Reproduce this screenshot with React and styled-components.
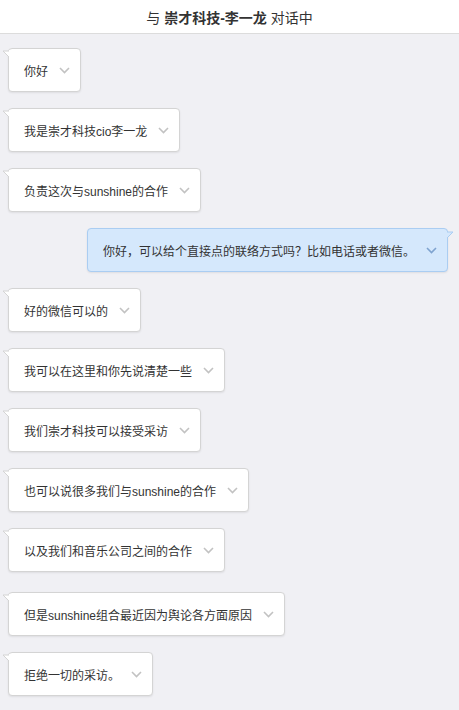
import React from 'react'
import styled, { createGlobalStyle } from 'styled-components'

const GlobalStyle = createGlobalStyle`
    html, body {
        margin: 0;
        padding: 0;
        background: #f0f0f4;
    }
    body {
        font-family: "Liberation Sans", "Noto Sans CJK SC", sans-serif;
        color: #333;
    }
`

const Page = styled.div`
    width: 459px;
    min-height: 710px;
    background: #f0f0f4;
`

const Header = styled.div`
    height: 33px;
    background: #fff;
    border-bottom: 1px solid #dcdcdc;
    display: flex;
    align-items: center;
    justify-content: center;
    font-size: 14px;
    color: #333;
    white-space: pre;
`

const Name = styled.b`
    font-weight: bold;
`

const List = styled.div`
    display: flex;
    flex-direction: column;
    padding: 14px 11px 0 8px;
`

const Row = styled.div`
    display: flex;
    justify-content: ${p => (p.$mine ? 'flex-end' : 'flex-start')};
    margin-top: ${p => (p.$first ? 0 : p.$extra ? 20 : 16)}px;
`

const Bubble = styled.div`
    position: relative;
    box-sizing: border-box;
    height: 44px;
    display: flex;
    align-items: center;
    gap: 11px;
    padding: 0 10px 0 15px;
    font-size: 12px;
    white-space: nowrap;
    color: #333;
    border-radius: 4px;
    background: ${p => (p.$mine ? '#d5e8fc' : '#fff')};
    border: 1px solid ${p => (p.$mine ? '#aacdf2' : '#d4d4d4')};
    box-shadow: 0 1px 2px rgba(0, 0, 0, 0.08);
`

const Tail = styled.svg`
    position: absolute;
    top: 1px;
    width: 8px;
    height: 9px;
    ${p => (p.$mine ? 'right: -7px; transform: scaleX(-1);' : 'left: -7px;')}
    top: ${p => (p.$mine ? 2 : 1)}px;
`

const Chevron = styled.svg`
    width: 11px;
    height: 7px;
    flex: none;
`

const messages = [
    { text: '你好' },
    { text: '我是崇才科技cio李一龙' },
    { text: '负责这次与sunshine的合作' },
    { text: '你好，可以给个直接点的联络方式吗？比如电话或者微信。', mine: true },
    { text: '好的微信可以的' },
    { text: '我可以在这里和你先说清楚一些' },
    { text: '我们崇才科技可以接受采访' },
    { text: '也可以说很多我们与sunshine的合作' },
    { text: '以及我们和音乐公司之间的合作' },
    { text: '但是sunshine组合最近因为舆论各方面原因', extra: true },
    { text: '拒绝一切的采访。' },
]

function Message({ text, mine }) {
    const fill = mine ? '#d5e8fc' : '#fff'
    const line = mine ? '#aacdf2' : '#d4d4d4'
    return (
        <Bubble $mine={mine}>
            <Tail $mine={mine} viewBox="0 0 8 9">
                <path d="M8 1 L1 1 L8 8" fill={fill} stroke={line} strokeWidth="1" />
                <rect x="7" y="0" width="1.5" height="9" fill={fill} />
            </Tail>
            {text}
            <Chevron viewBox="0 0 11 7">
                <path
                    d="M1 1 L5.5 5.5 L10 1"
                    fill="none"
                    stroke={mine ? '#7fa3cf' : '#c2c2c2'}
                    strokeWidth="1.6"
                />
            </Chevron>
        </Bubble>
    )
}

function App() {
    return (
        <Page>
            <GlobalStyle />
            <Header>
                与 <Name>崇才科技-李一龙</Name> 对话中
            </Header>
            <List>
                {messages.map((m, i) => (
                    <Row key={i} $mine={m.mine} $first={i === 0} $extra={m.extra}>
                        <Message text={m.text} mine={m.mine} />
                    </Row>
                ))}
            </List>
        </Page>
    )
}

export default App
